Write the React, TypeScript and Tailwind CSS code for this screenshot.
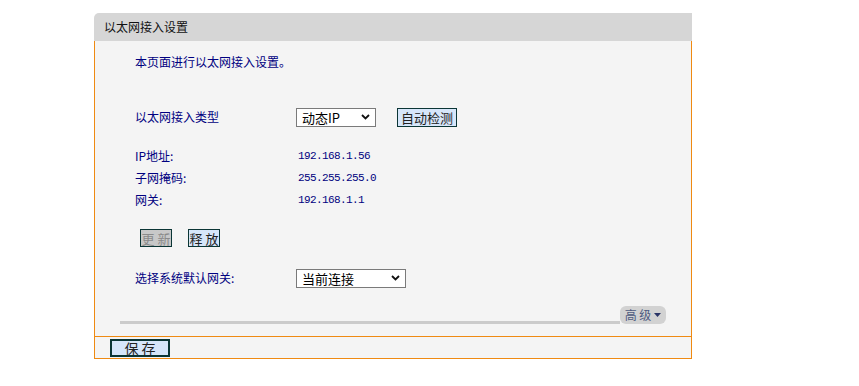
const cjk = { fontFamily: '"Noto Sans CJK SC", "Liberation Sans", sans-serif' };
const mono = { fontFamily: '"Liberation Mono", "Noto Sans CJK SC", monospace' };

function Chevron() {
  return (
    <svg width="9" height="6" viewBox="0 0 9 6" className="shrink-0">
      <polyline points="1,1 4.5,4.5 8,1" fill="none" stroke="#111" strokeWidth="1.8" />
    </svg>
  );
}

function FakeSelect({ value, width }: { value: string; width: string }) {
  return (
    <div className={`${width} h-[19px] border border-[#7a7a7a] bg-white flex items-center justify-between pl-[5px] pr-[5px] text-[13px] leading-none text-black`}>
      <span>{value}</span>
      <Chevron />
    </div>
  );
}

const info = [
  { label: "IP地址:", value: "192.168.1.56" },
  { label: "子网掩码:", value: "255.255.255.0" },
  { label: "网关:", value: "192.168.1.1" },
];

export default function App() {
  return (
    <div className="min-h-screen bg-white pt-[13px] pl-[94px]" style={cjk}>
      <div className="w-[598px]">
        <div className="h-[28px] bg-[#d6d6d6] rounded-tl-[5px] pl-[10px] flex items-center text-[12px] text-[#111]">
          以太网接入设置
        </div>

        <div className="h-[295px] bg-[#f4f4f4] border-x border-[#ef8a12] flex flex-col text-[12px] text-[#000080]">
          <p className="mt-[13px] ml-[40px] h-[16px] leading-[16px]">本页面进行以太网接入设置。</p>

          <div className="mt-[37px] ml-[40px] h-[20px] flex items-center">
            <span className="w-[161px]">以太网接入类型</span>
            <FakeSelect value="动态IP" width="w-[80px]" />
            <button className="ml-[21px] w-[60px] h-[19px] border border-[#0b3535] bg-[#d6e6fa] text-[13px] leading-none text-[#222] flex items-center justify-center">
              自动检测
            </button>
          </div>

          <div className="mt-[19px] ml-[40px] flex flex-col gap-[2px]">
            {info.map((r) => (
              <div key={r.label} className="h-[20px] flex items-center">
                <span className="w-[163px]">{r.label}</span>
                <span className="text-[11px] tracking-[-0.6px]" style={mono}>{r.value}</span>
              </div>
            ))}
          </div>

          <div className="mt-[19px] ml-[45px] flex gap-[16px]">
            <button className="w-[32px] h-[18px] border border-[#0b3535] bg-[#c8c8c8] text-[13px] leading-none text-[#8a8a8a] flex items-center justify-center">
              更 新
            </button>
            <button className="w-[32px] h-[18px] border border-[#0b3535] bg-[#d6e6fa] text-[13px] leading-none text-[#222] flex items-center justify-center">
              释 放
            </button>
          </div>

          <div className="mt-[21px] ml-[40px] h-[20px] flex items-center">
            <span className="w-[161px]">选择系统默认网关:</span>
            <FakeSelect value="当前连接" width="w-[110px]" />
          </div>

          <div className="mt-[18px] ml-[25px] mr-[25px] flex items-end">
            <div className="flex-1 h-[3px] bg-[#cbcbcb]" />
            <div className="w-[46px] h-[18px] rounded-[6px] bg-[#d2d2d2] flex items-center justify-center gap-[3px] text-[12px] text-[#4e5a80]">
              <span>高 级</span>
              <svg width="7" height="4" viewBox="0 0 7 4">
                <polygon points="0,0 7,0 3.5,4" fill="#2a3466" />
              </svg>
            </div>
          </div>
        </div>

        <div className="h-[23px] bg-[#f4f4f4] border border-[#ef8a12] pl-[15px] pt-[2px]">
          <button className="w-[60px] h-[18px] border-2 border-[#0b3535] bg-[#d6e6fa] text-[14px] leading-none text-[#222] flex items-center justify-center">
            保 存
          </button>
        </div>
      </div>
    </div>
  );
}
